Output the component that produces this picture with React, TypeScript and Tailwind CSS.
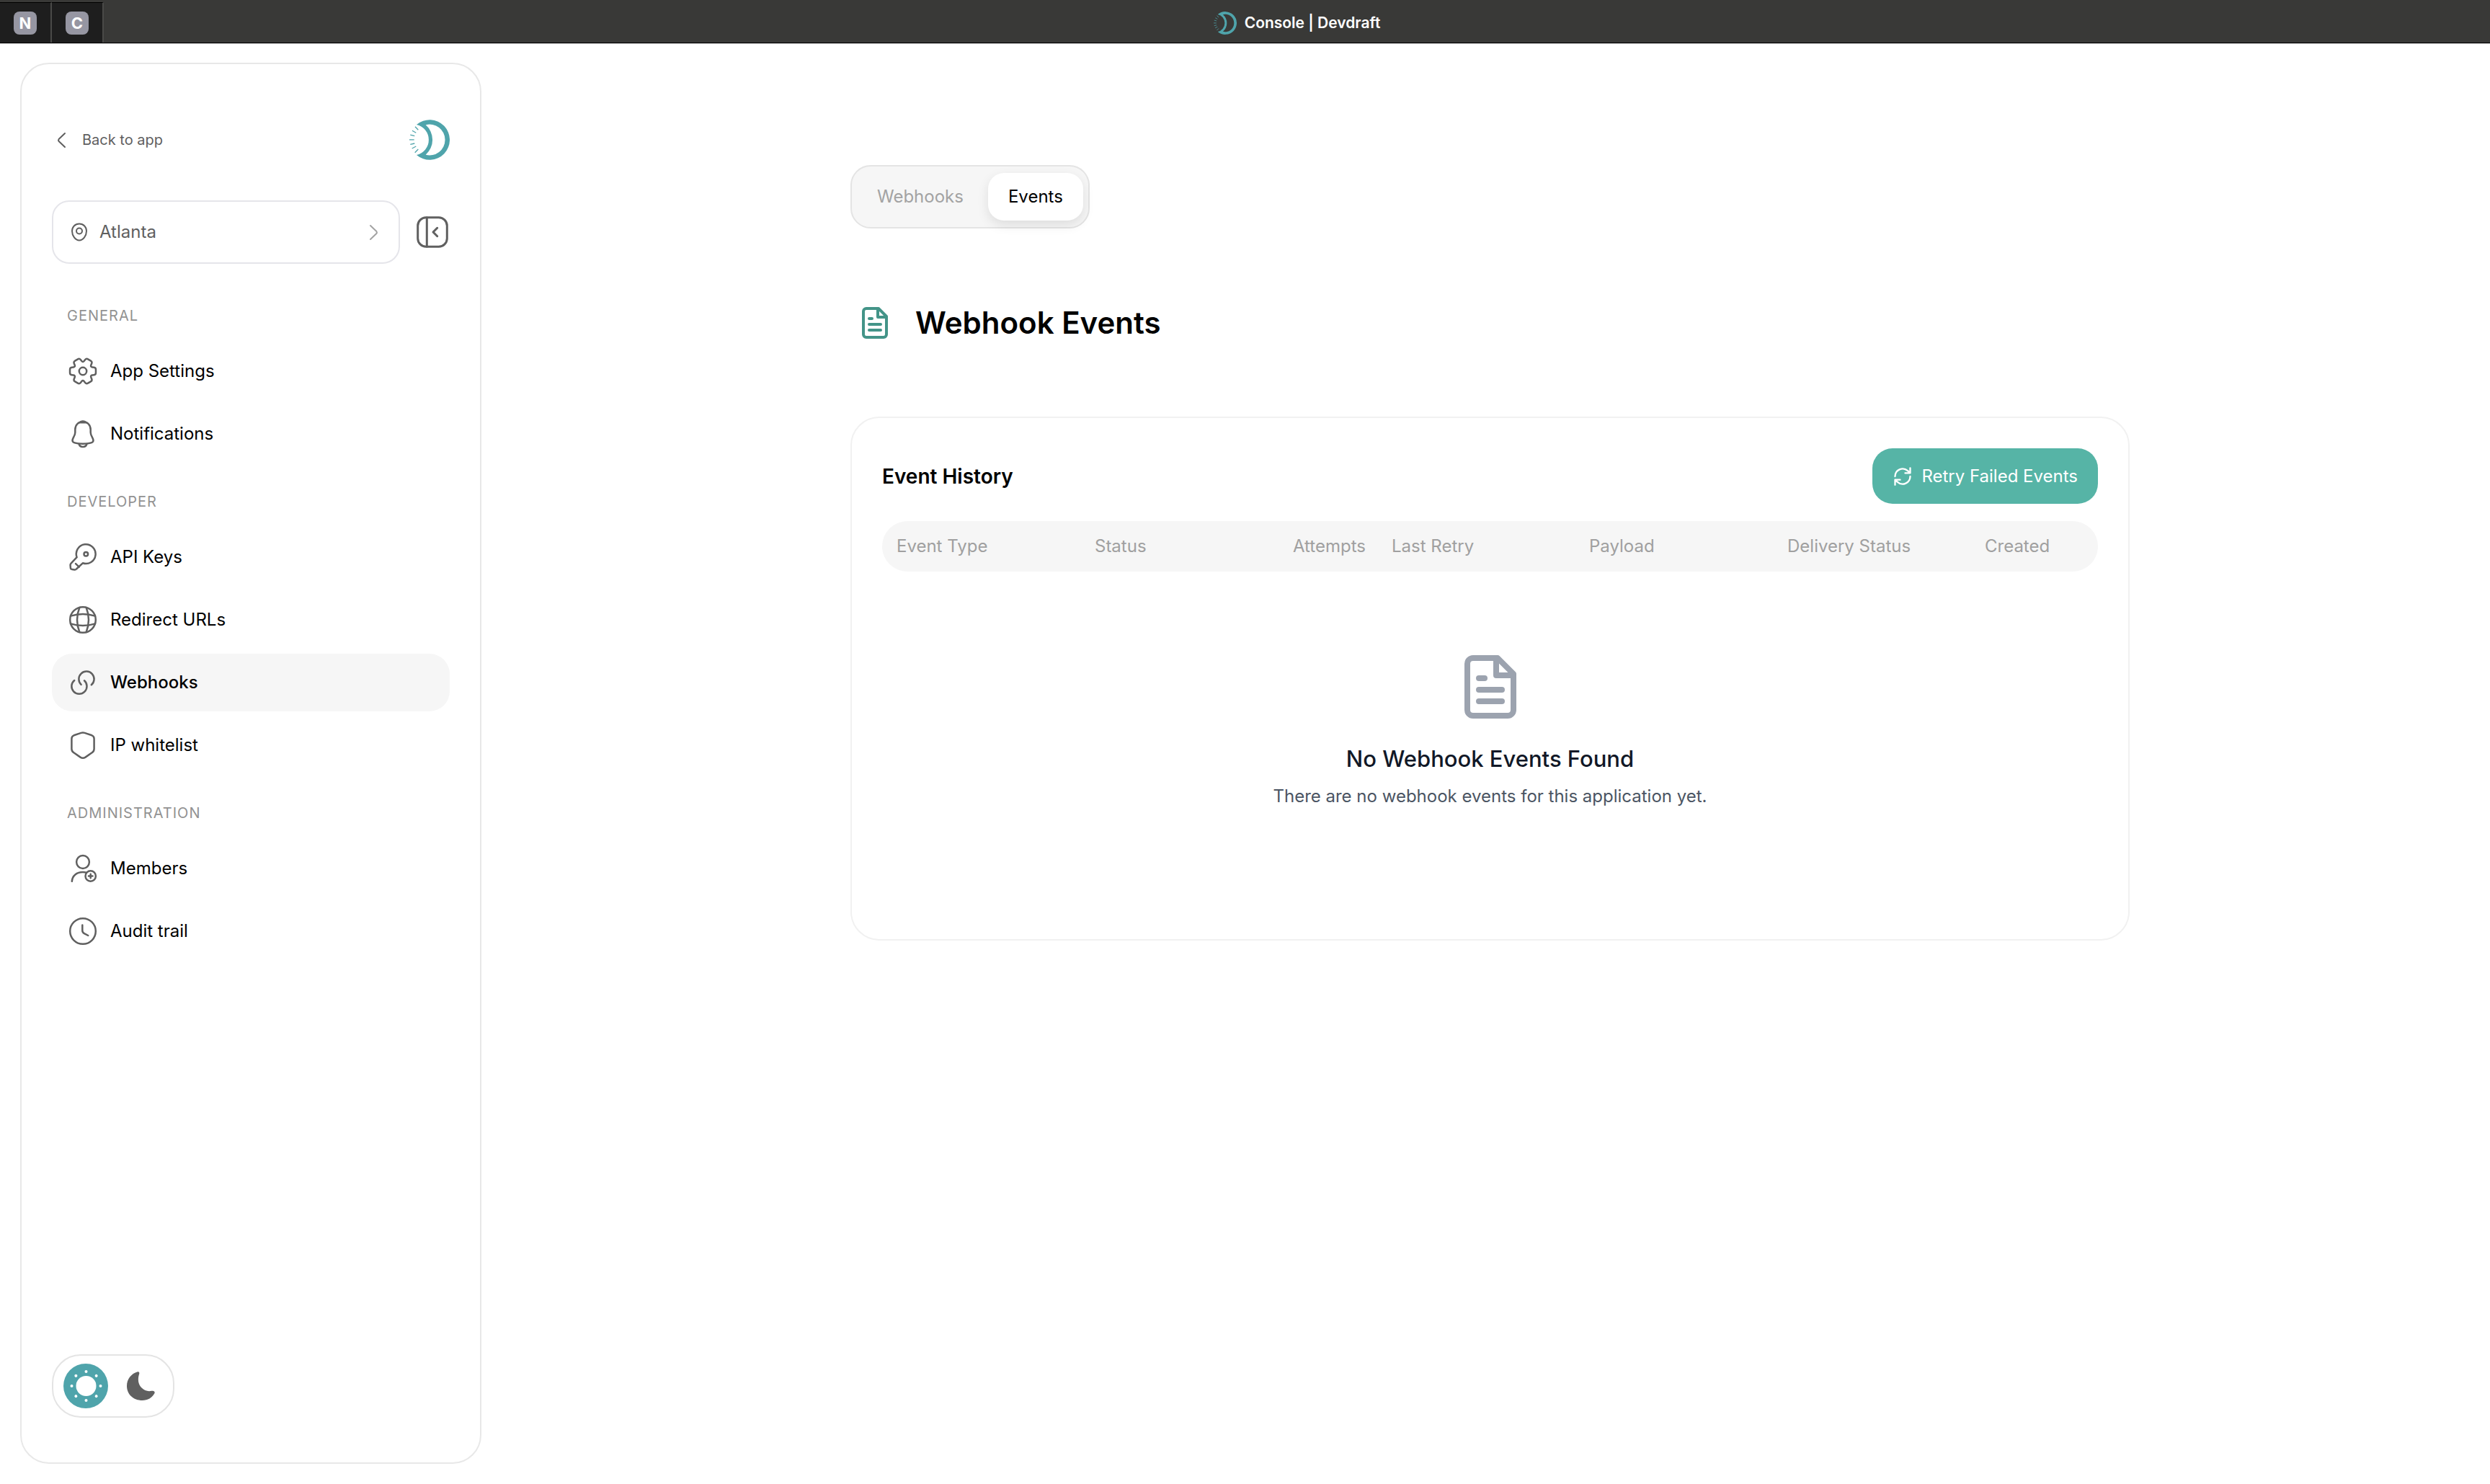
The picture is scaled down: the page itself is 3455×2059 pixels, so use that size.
import { useState } from "react";
import type { ReactNode } from "react";

type Point = [number, number];

// closed polygon with softened corners
function roundedPolygon(points: Point[], cut: number) {
    const toward = (from: Point, to: Point): Point => {
        const len = Math.hypot(to[0] - from[0], to[1] - from[1]);
        return [from[0] + ((to[0] - from[0]) * cut) / len, from[1] + ((to[1] - from[1]) * cut) / len];
    };
    const parts = points.map((p, i) => {
        const prev = points[(i + points.length - 1) % points.length];
        const next = points[(i + 1) % points.length];
        const a = toward(p, prev);
        const b = toward(p, next);
        return `${i === 0 ? "M" : "L"}${a[0]} ${a[1]}Q${p[0]} ${p[1]} ${b[0]} ${b[1]}`;
    });
    return parts.join("") + "Z";
}

function polar(radius: number, degrees: number): Point {
    const rad = (degrees * Math.PI) / 180;
    return [20 + radius * Math.cos(rad), 20 + radius * Math.sin(rad)];
}

const gearPath = roundedPolygon(
    [0, 60, 120, 180, 240, 300].flatMap((a): Point[] => [polar(12, a - 30), polar(18.6, a - 15), polar(18.6, a + 15)]),
    2.6
);

function NavIcon({ children }: { children: ReactNode }) {
    return (
        <svg viewBox="0 0 40 40" className="size-10 shrink-0 text-[#606060]" fill="none" stroke="currentColor" strokeWidth="2.5" strokeLinecap="round" strokeLinejoin="round" aria-hidden="true">
            {children}
        </svg>
    );
}

const sections = [
    {
        title: "GENERAL",
        items: [
            {
                label: "App Settings",
                icon: (
                    <>
                        <path d={gearPath} />
                        <circle cx="20" cy="20" r="5.2" />
                    </>
                ),
            },
            {
                label: "Notifications",
                icon: (
                    <>
                        <path d="M20 3C13.5 3 9.3 8 9.3 14V18C9.3 23 5.5 25.5 5.5 29.3C5.5 33 12 33.7 20 33.7S34.5 33 34.5 29.3C34.5 25.5 30.7 23 30.7 18V14C30.7 8 26.5 3 20 3Z" />
                        <path d="M14.5 34c1 3 3 4 5.5 4s4.5-1 5.5-4" />
                        <path d="M16 4.2C17.5 1.8 22.5 1.8 24 4.2Z" fill="currentColor" />
                    </>
                ),
            },
        ],
    },
    {
        title: "DEVELOPER",
        items: [
            {
                label: "API Keys",
                icon: (
                    <>
                        <path d="M11.6 20.2A13.4 13.4 0 1 1 19.8 28.3L11 36.5Q10 37.6 8.5 37.4L5 37Q3 36.8 2.9 35L2.6 31.5Q2.4 29.8 3.6 28.6Z" />
                        <path d="M10 29.2l4.8 4.4" />
                        <circle cx="24.3" cy="15.7" r="2.8" />
                    </>
                ),
            },
            {
                label: "Redirect URLs",
                icon: (
                    <>
                        <circle cx="20" cy="20" r="17.8" />
                        <path d="M15.3 3Q8.7 20 15.3 37M24.7 3Q31.3 20 24.7 37" />
                        <path d="M3 14.6Q20 9.4 37 14.6M3 25.4Q20 30.6 37 25.4" />
                    </>
                ),
            },
            {
                label: "Webhooks",
                icon: (
                    <>
                        <path d="M31.8 23.3A10.6 10.6 0 1 0 17.6 22.8" />
                        <path d="M8.2 17A10.6 10.6 0 1 0 22 17.3" />
                    </>
                ),
            },
            {
                label: "IP whitelist",
                icon: (
                    <path d="M17.5 2.9Q20 2 22.5 2.9L32.5 6.3Q35.6 7.5 35.6 11V25Q35.6 28.3 33 30L23.5 36.6Q20 38.8 16.5 36.6L7 30Q4.4 28.3 4.4 25V11Q4.4 7.5 7.5 6.3Z" />
                ),
            },
        ],
    },
    {
        title: "ADMINISTRATION",
        items: [
            {
                label: "Members",
                icon: (
                    <>
                        <circle cx="20" cy="11" r="8.9" />
                        <path d="M4.8 37.8C5.3 30 11.5 25 20 25Q22.5 25 24.8 25.6" />
                        <circle cx="30.7" cy="30.5" r="7.2" />
                        <path d="M30.7 27.7V33.3M27.9 30.5H33.5" />
                    </>
                ),
            },
            {
                label: "Audit trail",
                icon: (
                    <>
                        <circle cx="20" cy="20" r="17.8" />
                        <path d="M19.3 11.5V19Q19.3 21.8 21.8 23.2L27.3 26" />
                    </>
                ),
            },
        ],
    },
];

const columns = [
    { label: "Event Type", width: "w-[275px]" },
    { label: "Status", width: "w-[275px]" },
    { label: "Attempts", width: "w-[137px]" },
    { label: "Last Retry", width: "w-[274px]" },
    { label: "Payload", width: "w-[275px]" },
    { label: "Delivery Status", width: "w-[274px]" },
    { label: "Created", width: "" },
];

function Logo({ className }: { className: string }) {
    return (
        <svg viewBox="0 0 56 56" className={className} aria-hidden="true">
            <path fill="#4fa4ab" fillRule="evenodd" d="M10 7A27.8 27.8 0 1 1 10 49A21.5 21.5 0 0 0 10 7ZM22.7 7.3A21.4 21.4 0 1 1 22.7 48.7A27.5 27.5 0 0 0 22.7 7.3Z" />
            <path stroke="#4fa4ab" strokeWidth="1.3" d="M8 9.7L12.3 14.3M4 15.3L9.3 18.3M1.3 21.2L7.3 22.7M0 27.9H6.7M1.3 34.4L7.3 33M3.7 40L9.3 37M7.7 45.7L12.3 41" />
        </svg>
    );
}

function FileText({ className }: { className: string }) {
    return (
        <svg viewBox="0 0 24 24" className={className} fill="none" stroke="currentColor" strokeWidth="2" strokeLinecap="round" strokeLinejoin="round" aria-hidden="true">
            <path d="M14.5 2H6a2 2 0 0 0-2 2v16a2 2 0 0 0 2 2h12a2 2 0 0 0 2-2V7.5L14.5 2z" />
            <path d="M14 2v6h6M16 13H8M16 17H8M10 9H8" />
        </svg>
    );
}

function TopBar() {
    return (
        <header className="flex h-[61px] shrink-0 border-b border-[#c4c4c4] bg-black pb-px">
            <div className="flex bg-[#393937] pt-[3px]">
                {["N", "C"].map((letter) => (
                    <button key={letter} className="flex w-[72px] items-center justify-center border-t border-r-2 border-t-black border-r-[#4a4a48] bg-[#1e1e1e]">
                        <span className="flex size-8 items-center justify-center rounded-lg bg-[#9696a2] text-[22px] leading-8 font-bold text-white">{letter}</span>
                    </button>
                ))}
            </div>
            <div className="flex flex-1 items-center justify-center gap-[11px] bg-[#393937] pt-[5px]">
                <Logo className="size-8" />
                <span className="text-[21px] leading-7 font-semibold text-white">Console | Devdraft</span>
            </div>
        </header>
    );
}

function Sidebar() {
    const [dark, setDark] = useState(false);

    return (
        <aside className="flex w-[640px] shrink-0 flex-col rounded-[40px] border-2 border-[#e8e8e8] px-[42px] pt-[77px] pb-[62px]">
            <div className="flex items-center justify-between">
                <a href="#" className="flex items-center gap-[22px] pl-[6px] text-xl leading-7 text-[#5f5f5f]">
                    <svg viewBox="0 0 14 24" className="h-6 w-[14px]" fill="none" stroke="currentColor" strokeWidth="2" strokeLinecap="round" strokeLinejoin="round" aria-hidden="true">
                        <path d="M12 3L3.6 11Q2.6 12.5 3.6 14L12 22" />
                    </svg>
                    Back to app
                </a>
                <Logo className="size-14" />
            </div>

            <div className="mt-14 flex items-center gap-[21px]">
                <button className="flex h-[88px] flex-1 items-center gap-[14px] rounded-3xl border-2 border-[#e5e5ea] pr-[27px] pl-[22px] text-2xl text-[#5f5f5f]">
                    <svg viewBox="0 0 28 28" className="size-7" fill="none" stroke="currentColor" strokeWidth="2" aria-hidden="true">
                        <path d="M14 2.5C8 2.5 4 7 4 12.5C4 19 8.5 25.5 14 25.5S24 19 24 12.5C24 7 20 2.5 14 2.5Z" />
                        <circle cx="14" cy="12.5" r="4" />
                    </svg>
                    <span className="flex-1 text-left">Atlanta</span>
                    <svg viewBox="0 0 14 24" className="h-6 w-[14px] text-[#a3a3a3]" fill="none" stroke="currentColor" strokeWidth="2" strokeLinecap="round" strokeLinejoin="round" aria-hidden="true">
                        <path d="M2 3L10.4 11Q11.4 12.5 10.4 14L2 22" />
                    </svg>
                </button>
                <button aria-label="Collapse sidebar">
                    <svg viewBox="0 0 48 48" className="size-12 text-[#606060]" fill="none" stroke="currentColor" strokeWidth="3" strokeLinecap="round" strokeLinejoin="round" aria-hidden="true">
                        <rect x="3.7" y="3.7" width="40.6" height="40.6" rx="11.5" />
                        <path d="M16.3 4V44M30.7 18.3L25 24L30.7 29.7" />
                    </svg>
                </button>
            </div>

            <nav className="mt-[58px] flex flex-col gap-10">
                {sections.map((section) => (
                    <div key={section.title}>
                        <div className="mb-[23px] pl-[21px] text-xl leading-7 tracking-wider text-[#929292]">{section.title}</div>
                        <div className="flex flex-col gap-[7px]">
                            {section.items.map((item) => (
                                <a
                                    key={item.label}
                                    href="#"
                                    className={
                                        item.label === "Webhooks"
                                            ? "flex h-20 items-center gap-[18px] rounded-[28px] bg-[#f6f6f6] px-[23px] text-2xl font-medium text-black"
                                            : "flex h-20 items-center gap-[18px] rounded-[28px] px-[23px] text-2xl text-black"
                                    }
                                >
                                    <NavIcon>{item.icon}</NavIcon>
                                    {item.label}
                                </a>
                            ))}
                        </div>
                    </div>
                ))}
            </nav>

            <div className="mt-auto flex h-[88px] w-[170px] items-center gap-[15px] rounded-[40px] border-2 border-[#e4e4e4] px-[14px]">
                <button aria-label="Light mode" aria-pressed={!dark} onClick={() => setDark(false)}>
                    <svg viewBox="0 0 62 62" className="size-[62px]" fill="white" aria-hidden="true">
                        <circle cx="31" cy="31" r="31" fill="#4fa4ab" />
                        <circle cx="31.5" cy="31" r="14" />
                        {[0, 45, 90, 135, 180, 225, 270, 315].map((a) => (
                            <circle key={a} cx="51.5" cy="31" r="2" transform={`rotate(${a} 31.5 31)`} />
                        ))}
                    </svg>
                </button>
                <button aria-label="Dark mode" aria-pressed={dark} onClick={() => setDark(true)}>
                    <svg viewBox="0 0 60 62" className="h-[62px] w-[60px]" fill="#606060" aria-hidden="true">
                        <path d="M26 11.2C28 10.8 28.8 12.6 28.1 14.5C25.6 22 27 29 31.5 33.5C35.5 37.6 40 38.8 45.5 37.8C48.3 37.3 50.4 38.6 49.5 41C46 47.5 40 51 32.5 51C20 51 11 42.5 11 31C11 21.5 17 13.8 26 11.2Z" />
                    </svg>
                </button>
            </div>
        </aside>
    );
}

function EventHistory() {
    return (
        <section className="mt-[106px] rounded-[40px] border-2 border-[#f1f1f1] px-[42px] pt-[42px] pb-[42px]">
            <div className="flex items-center justify-between">
                <h2 className="text-[28px] leading-9 font-semibold text-black">Event History</h2>
                <button className="flex h-[77px] items-center gap-3 rounded-[28px] bg-[#56b4a6] px-7 text-2xl text-white">
                    <svg viewBox="0 0 24 24" className="size-7" fill="none" stroke="currentColor" strokeWidth="2" strokeLinecap="round" strokeLinejoin="round" aria-hidden="true">
                        <path d="M21 2v6h-6M3 12a9 9 0 0 1 15-6.7L21 8M3 22v-6h6M21 12a9 9 0 0 1-15 6.7L3 16" />
                    </svg>
                    Retry Failed Events
                </button>
            </div>

            <table className="mt-6 w-full table-fixed">
                <thead>
                    <tr className="h-[70px]">
                        {columns.map((col) => (
                            <th key={col.label} className={`${col.width} bg-[#f6f6f6] pl-5 text-left text-2xl font-normal whitespace-nowrap text-[#a0a0a0] first:rounded-l-full last:rounded-r-full`}>
                                {col.label}
                            </th>
                        ))}
                    </tr>
                </thead>
            </table>

            <div className="flex flex-col items-center pt-[112px] pb-[140px] text-center">
                <FileText className="size-24 text-[#9ca3af]" />
                <h3 className="mt-8 text-[31px] leading-10 font-medium text-[#111827]">No Webhook Events Found</h3>
                <p className="mt-4 text-2xl text-[#4b5563]">There are no webhook events for this application yet.</p>
            </div>
        </section>
    );
}

function App() {
    const [tab, setTab] = useState("Events");

    return (
        <div className="flex min-h-screen flex-col bg-white font-['Inter',sans-serif]">
            <TopBar />
            <div className="flex flex-1 pt-[26px] pb-7 pl-7">
                <Sidebar />
                <main className="flex-1 pt-[142px] pl-3">
                    <div className="mx-auto w-full max-w-[1775px]">
                        <div className="flex h-[88px] w-fit items-center gap-[6px] rounded-[28px] border-2 border-[#e4e4e4] bg-[#f6f6f6] px-[7px]">
                            {["Webhooks", "Events"].map((name) => (
                                <button
                                    key={name}
                                    onClick={() => setTab(name)}
                                    className={
                                        tab === name
                                            ? "h-[66px] rounded-[22px] bg-white px-7 text-2xl text-black shadow-[0_6px_16px_rgba(0,0,0,0.1)]"
                                            : "h-[66px] rounded-[22px] px-7 text-2xl text-[#a3a3a3]"
                                    }
                                >
                                    {name}
                                </button>
                            ))}
                        </div>

                        <div className="mt-[107px] flex items-center gap-8 pl-[10px]">
                            <FileText className="size-12 text-[#439488]" />
                            <h1 className="text-[42px] leading-[48px] font-semibold text-black">Webhook Events</h1>
                        </div>

                        <EventHistory />
                    </div>
                </main>
            </div>
        </div>
    );
}

export default App;
